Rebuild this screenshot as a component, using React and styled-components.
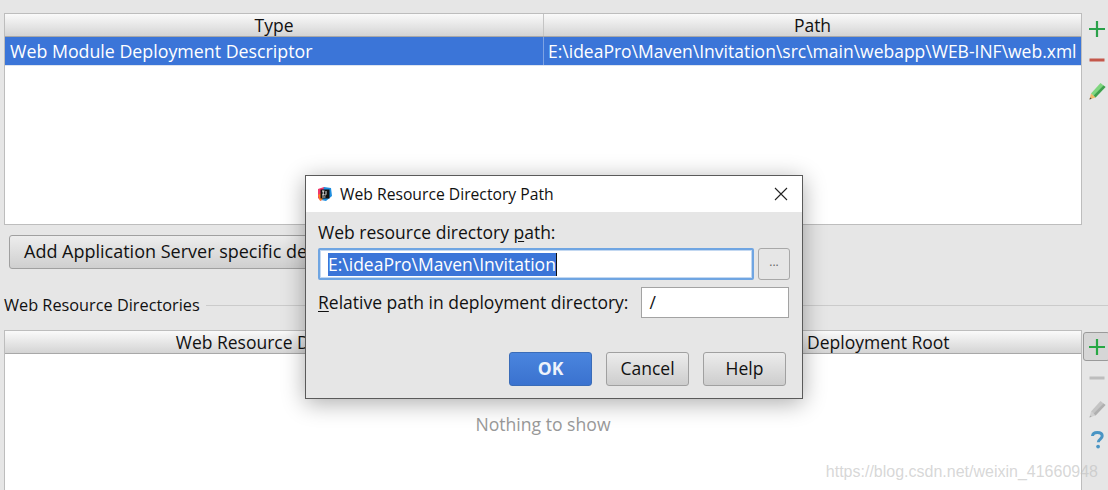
import React from 'react';
import styled, { createGlobalStyle } from 'styled-components';

const GlobalStyle = createGlobalStyle`
    html, body {
        margin: 0;
        padding: 0;
        background: #e6e6e6;
    }
    body {
        font-family: 'Open Sans', 'Noto Sans', 'Liberation Sans', sans-serif;
        font-size: 18px;
        color: #111;
    }
`;

const Page = styled.div`
    position: relative;
    width: 1108px;
    height: 490px;
    overflow: hidden;
    padding-top: 13px;
    box-sizing: border-box;
`;

const TableRow = styled.div`
    display: flex;
    height: ${(p) => p.$height}px;
    padding-left: 4px;
`;

const Table = styled.div`
    width: 1078px;
    box-sizing: border-box;
    border: 1px solid #bdbdbd;
    border-bottom-width: ${(p) => (p.$open ? 0 : 1)}px;
    background: #fff;
`;

const Header = styled.div`
    display: grid;
    grid-template-columns: 538px 1fr;
    height: 22px;
    background: linear-gradient(#fafafa, #d4d4d4);
    border-bottom: 1px solid #a8a8a8;
`;

const HeaderCell = styled.div`
    text-align: center;
    font-size: 17.5px;
    line-height: 23px;
    white-space: nowrap;
    overflow: hidden;
    & + & {
        border-left: 1px solid #c4c4c4;
    }
`;

const SelectedRow = styled.div`
    display: grid;
    grid-template-columns: 538px 1fr;
    height: 28px;
    background: #3b75d8;
    color: #fff;
    line-height: 29px;
    white-space: nowrap;
    border-bottom: 1px solid #dde4ef;
`;

const SelectedCell = styled.div`
    padding-left: ${(p) => p.$pad}px;
    font-size: ${(p) => p.$size}px;
    overflow: hidden;
    & + & {
        border-left: 1px solid #7ea3e3;
    }
`;

const SideBar = styled.div`
    display: flex;
    flex-direction: column;
    align-items: center;
    width: 26px;
    box-sizing: border-box;
    padding: ${(p) => p.$top}px 0 0 4px;
`;

const ToolSlot = styled.div`
    display: flex;
    align-items: center;
    justify-content: center;
    height: 31px;
`;

const ToolBox = styled.div`
    display: flex;
    align-items: center;
    justify-content: center;
    width: 27px;
    height: 29px;
    margin-left: -1px;
    box-sizing: border-box;
    border: 1px solid #9a9a9a;
    border-radius: 3px;
    background: #d6d6d6;
`;

const WideButton = styled.button`
    display: block;
    margin: 10px 0 0 9px;
    height: 34px;
    padding: 0 14px 2px 14px;
    text-align: left;
    font: inherit;
    font-size: 18px;
    color: #111;
    white-space: nowrap;
    border: 1px solid #a0a0a0;
    border-radius: 3px;
    background: linear-gradient(#ededed, #cfcfcf);
`;

const SectionTitle = styled.div`
    display: flex;
    align-items: center;
    gap: 6px;
    height: 24px;
    margin: 24px 0 13px 4px;
    font-size: 16.3px;
    white-space: nowrap;
    &::after {
        content: '';
        flex: 1;
        height: 1px;
        background: #cbcbcb;
    }
`;

const EmptyText = styled.div`
    padding-top: 58px;
    text-align: center;
    font-size: 17.6px;
    color: #999;
`;

const Watermark = styled.div`
    position: absolute;
    right: 10px;
    bottom: 9px;
    font-family: 'Liberation Sans', Arial, sans-serif;
    font-size: 16px;
    color: rgba(190, 190, 190, 0.62);
    white-space: nowrap;
`;

const Dialog = styled.div`
    position: absolute;
    left: 305px;
    top: 175px;
    width: 498px;
    height: 224px;
    box-sizing: border-box;
    background: #e6e6e6;
    border: 1px solid #5a5a5a;
    box-shadow: 0 4px 22px rgba(0, 0, 0, 0.33);
`;

const TitleBar = styled.div`
    display: flex;
    align-items: center;
    height: 36px;
    padding: 0 14px 0 11px;
    background: #fff;
    font-size: 15.7px;
`;

const TitleText = styled.span`
    flex: 1;
    margin-left: 7px;
`;

const DialogBody = styled.div`
    display: flex;
    flex-direction: column;
    padding: 8px 12px 0 12px;
`;

const FieldLabel = styled.div`
    font-size: 17.5px;
    line-height: 24px;
    padding-bottom: ${(p) => (p.$raised ? 2 : 0)}px;
    white-space: nowrap;
    & u {
        text-underline-offset: 2px;
    }
`;

const PathRow = styled.div`
    display: flex;
    gap: 4px;
    margin-top: 4px;
`;

const PathInput = styled.div`
    width: 436px;
    height: 32px;
    box-sizing: border-box;
    padding: 3px 0 0 8px;
    background: #fff;
    border: 2px solid #6fa5e2;
    border-radius: 2px;
    box-shadow: inset 0 0 0 1px #c3d8f1;
    font-size: 17.5px;
    line-height: 23px;
    white-space: nowrap;
`;

const Selection = styled.span`
    display: inline-block;
    background: #3b75d8;
    color: #fff;
    height: 23px;
    border-right: 1px solid #111;
`;

const BrowseButton = styled.div`
    width: 32px;
    height: 32px;
    box-sizing: border-box;
    border: 1px solid #a8a8a8;
    border-radius: 3px;
    text-align: center;
    font-size: 12px;
    line-height: 26px;
    color: #666;
`;

const RelativeRow = styled.div`
    display: flex;
    align-items: center;
    gap: 13px;
    margin-top: 7px;
`;

const RelativeInput = styled.div`
    width: 148px;
    height: 31px;
    box-sizing: border-box;
    padding-left: 7px;
    background: #fff;
    border: 1px solid #a3a3a3;
    font-size: 17.5px;
    line-height: 29px;
`;

const ButtonRow = styled.div`
    display: flex;
    justify-content: flex-end;
    gap: 14px;
    margin: 34px 4px 0 0;
`;

const DialogButton = styled.div`
    width: 83px;
    height: 34px;
    box-sizing: border-box;
    border: 1px solid ${(p) => (p.$primary ? '#3a6cb8' : '#a0a0a0')};
    border-radius: 3px;
    background: ${(p) =>
        p.$primary
            ? 'linear-gradient(#4a85de, #3a72cf)'
            : 'linear-gradient(#ececec, #cdcdcd)'};
    color: ${(p) => (p.$primary ? '#eef3fb' : '#111')};
    font-weight: ${(p) => (p.$primary ? 700 : 400)};
    font-size: 17.5px;
    line-height: 30px;
    text-align: center;
`;

const PlusIcon = ({ color = '#2aa14a' }) => (
    <svg width="18" height="18" viewBox="0 0 18 18">
        <path d="M9 1v16M1 9h16" stroke={color} strokeWidth="2.2" fill="none" />
    </svg>
);

const MinusIcon = ({ color }) => (
    <svg width="18" height="18" viewBox="0 0 18 18">
        <path d="M1.5 9h15" stroke={color} strokeWidth="3" fill="none" />
    </svg>
);

const PencilIcon = ({ body, edge, tip, dark }) => (
    <svg width="18" height="18" viewBox="0 0 18 18">
        <path d="M12.5 1l5 4L7.5 15.5 3 11.5z" fill={body} />
        <path d="M17.5 5L7.5 15.5l-2-1.8L15.5 3.4z" fill={edge} />
        <path d="M3 11.5l4.5 4L1.5 17.5z" fill={tip} />
        <path d="M2.1 15.4L1.5 17.5l2.2-.8z" fill={dark} />
    </svg>
);

const HelpIcon = () => (
    <svg width="13" height="18" viewBox="0 0 13 18">
        <path
            d="M1.5 5C1.7 2.6 3.6 1.5 6.3 1.5c2.8 0 4.9 1.2 4.9 3.6 0 3-3.9 3-3.9 6.2"
            stroke="#4a95c4"
            strokeWidth="3"
            fill="none"
        />
        <circle cx="7.1" cy="15.6" r="1.9" fill="#4a95c4" />
    </svg>
);

const IdeaLogo = () => (
    <svg width="16" height="16" viewBox="0 0 16 16">
        <path d="M1 3l6-2 3 3-6 11-3-3z" fill="#f0386b" />
        <path d="M7 1l7 1 1 8-6 5-5-1z" fill="#1f8fe0" />
        <path d="M1 9l4-2 1 6-3 2z" fill="#fc801d" />
        <rect x="3.5" y="3.5" width="9" height="9" fill="#111" />
        <path d="M5 5h2.4M6.2 5v4M5 9h2.4M9 5v3.4c0 .8-1.3.8-1.5.2" stroke="#fff" strokeWidth=".9" fill="none" />
        <path d="M5 11h3.5" stroke="#fff" strokeWidth=".8" />
    </svg>
);

const CloseIcon = () => (
    <svg width="14" height="14" viewBox="0 0 14 14">
        <path d="M1 1l12 12M13 1L1 13" stroke="#222" strokeWidth="1.1" fill="none" />
    </svg>
);

const App = () => {
    return (
        <Page>
            <GlobalStyle />
            <TableRow $height={212}>
                <Table>
                    <Header>
                        <HeaderCell>Type</HeaderCell>
                        <HeaderCell>Path</HeaderCell>
                    </Header>
                    <SelectedRow>
                        <SelectedCell $pad={5} $size={17.8}>
                            Web Module Deployment Descriptor
                        </SelectedCell>
                        <SelectedCell $pad={4} $size={17.5}>
                            E:\ideaPro\Maven\Invitation\src\main\webapp\WEB-INF\web.xml
                        </SelectedCell>
                    </SelectedRow>
                </Table>
                <SideBar $top={0}>
                    <ToolSlot>
                        <PlusIcon />
                    </ToolSlot>
                    <ToolSlot>
                        <MinusIcon color="#c4574a" />
                    </ToolSlot>
                    <ToolSlot>
                        <PencilIcon body="#7fd67f" edge="#3f9f4f" tip="#f0b86a" dark="#444" />
                    </ToolSlot>
                </SideBar>
            </TableRow>

            <WideButton>Add Application Server specific descriptor...</WideButton>
            <SectionTitle>Web Resource Directories</SectionTitle>

            <TableRow $height={160}>
                <Table $open>
                    <Header>
                        <HeaderCell>Web Resource Directory</HeaderCell>
                        <HeaderCell>Path Relative to Deployment Root</HeaderCell>
                    </Header>
                    <EmptyText>Nothing to show</EmptyText>
                </Table>
                <SideBar $top={1}>
                    <ToolSlot>
                        <ToolBox>
                            <PlusIcon color="#27a844" />
                        </ToolBox>
                    </ToolSlot>
                    <ToolSlot>
                        <MinusIcon color="#bdbdbd" />
                    </ToolSlot>
                    <ToolSlot>
                        <PencilIcon body="#c4c4c4" edge="#b0b0b0" tip="#d0d0d0" dark="#aaa" />
                    </ToolSlot>
                    <ToolSlot>
                        <HelpIcon />
                    </ToolSlot>
                </SideBar>
            </TableRow>

            <Watermark>https://blog.csdn.net/weixin_41660948</Watermark>

            <Dialog>
                <TitleBar>
                    <IdeaLogo />
                    <TitleText>Web Resource Directory Path</TitleText>
                    <CloseIcon />
                </TitleBar>
                <DialogBody>
                    <FieldLabel>
                        Web resource directory <u>p</u>ath:
                    </FieldLabel>
                    <PathRow>
                        <PathInput>
                            <Selection>E:\ideaPro\Maven\Invitation</Selection>
                        </PathInput>
                        <BrowseButton>...</BrowseButton>
                    </PathRow>
                    <RelativeRow>
                        <FieldLabel $raised>
                            <u>R</u>elative path in deployment directory:
                        </FieldLabel>
                        <RelativeInput>/</RelativeInput>
                    </RelativeRow>
                    <ButtonRow>
                        <DialogButton $primary>OK</DialogButton>
                        <DialogButton>Cancel</DialogButton>
                        <DialogButton>Help</DialogButton>
                    </ButtonRow>
                </DialogBody>
            </Dialog>
        </Page>
    );
};

export default App;
